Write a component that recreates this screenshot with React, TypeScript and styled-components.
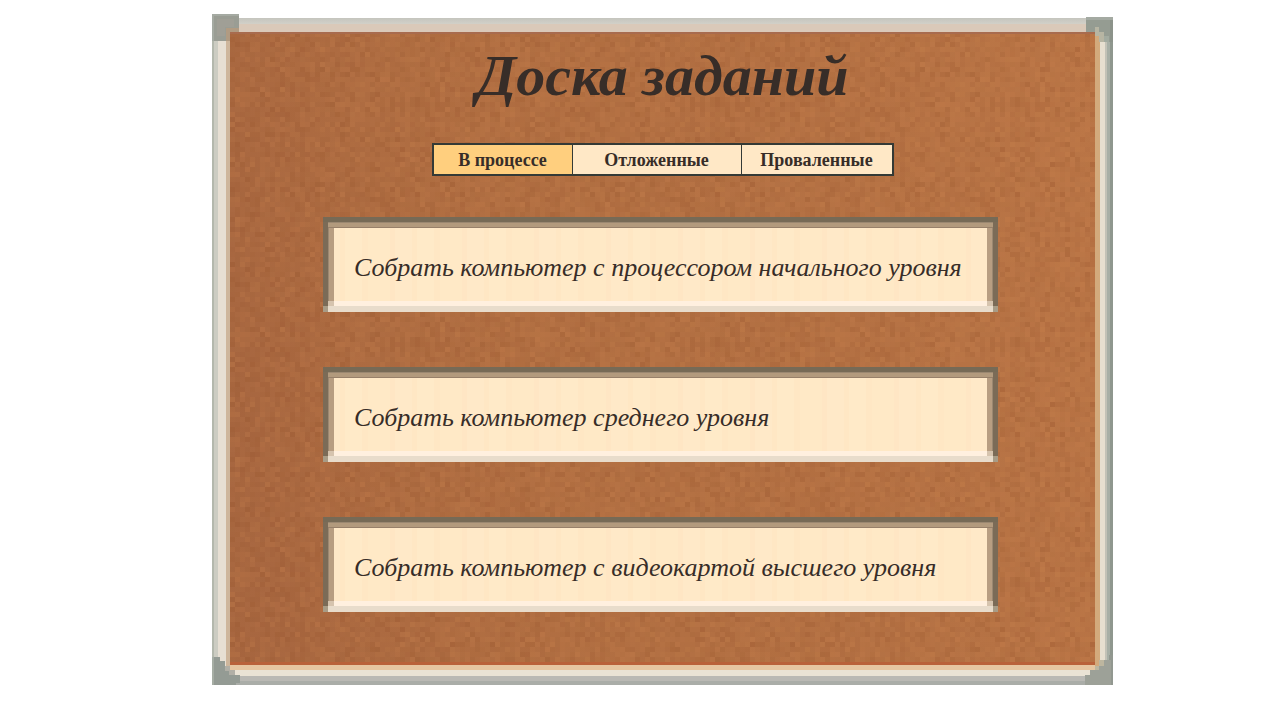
import React, { useState } from 'react';
import styled, { createGlobalStyle } from 'styled-components';

const GlobalStyle = createGlobalStyle`
  * { box-sizing: border-box; }
  body { margin: 0; background: #fff; }
`;

const Page = styled.div`
  display: flex;
  justify-content: center;
  min-height: 100vh;
  padding: 18px 0 36px 45px;
  font-family: 'Liberation Serif', serif;
  color: #372d28;
`;

const Board = styled.main`
  position: relative;
  align-self: flex-start;
  width: 100%;
  max-width: 901px;
  padding: 14px 18px 20px;
  background:
    linear-gradient(#c5c5be, #d2d0c8 6px, transparent 6px) top / 100% 6px no-repeat,
    linear-gradient(to right, #b4b8ad 2px, #ccccc2 2px, #ccccc2 6px, #e7dfd3 6px, #e7dfd3 14px, #ceb69c 14px) left / 18px 100% no-repeat,
    linear-gradient(to left, #8f978e 3px, #a8afa6 3px, #a8afa6 6px, #c3c2b7 6px, #c3c2b7 8px, #e7dfd0 8px, #e7dfd0 13px, #d3aa7c 13px) right / 18px 100% no-repeat,
    linear-gradient(to top, #aaada8 4px, #bab9b4 4px, #bab9b4 9px, #eae3d5 9px, #eae3d5 15px, #e6c6a1 15px) bottom / 100% 20px no-repeat,
    #dac9b9;
`;

const Cork = styled.div`
  position: relative;
  display: flex;
  flex-direction: column;
  align-items: center;
  min-height: 633px;
  padding: 8px 92px 53px;
  background: #b37043;
`;

const Texture = styled.svg`
  position: absolute;
  inset: 0;
  width: 100%;
  height: 100%;
`;

const CornerArt = styled.svg<{ $bottom?: boolean; $right?: boolean }>`
  position: absolute;
  width: 28px;
  height: 30px;
  ${p => (p.$bottom ? 'bottom: 0;' : p.$right ? 'top: -2px;' : 'top: -4px;')}
  ${p => (p.$right ? 'right: 0;' : 'left: 0;')}
`;

const Title = styled.h1`
  position: relative;
  margin: 0;
  font-size: 58px;
  line-height: 72px;
  font-style: italic;
  font-weight: 700;
`;

const Tabs = styled.nav`
  position: relative;
  display: grid;
  grid-template-columns: 138fr 169fr 151fr;
  width: 100%;
  max-width: 462px;
  height: 33px;
  margin-top: 31px;
  border: 2px solid #343a36;
`;

const Tab = styled.button<{ $active: boolean }>`
  border: 0;
  padding: 0 2px;
  background: ${p => (p.$active ? '#ffcf7e' : '#ffe8c6')};
  color: inherit;
  font: 700 18px/28px 'Liberation Serif', serif;
  cursor: pointer;
  & + & { border-left: 1px solid #343a36; }
`;

const TaskList = styled.ul`
  position: relative;
  display: flex;
  flex-direction: column;
  gap: 55px;
  width: 100%;
  max-width: 675px;
  margin: 41px 4px 0 0;
  padding: 0;
  list-style: none;
`;

const Task = styled.li`
  position: relative;
  display: flex;
  align-items: center;
  min-height: 95px;
  padding: 6px 31px 0;
  font-size: 26px;
  line-height: 32px;
  font-style: italic;
  background:
    linear-gradient(#a89c86, #a89c86) left bottom / 5px 6px no-repeat,
    linear-gradient(#a89c86, #a89c86) right bottom / 5px 6px no-repeat,
    linear-gradient(#766a56, #766a56) top / 100% 5px no-repeat,
    linear-gradient(#7b6b57, #7b6b57) left / 5px 100% no-repeat,
    linear-gradient(#7b6b57, #7b6b57) right / 5px 100% no-repeat,
    linear-gradient(#e8dccb, #e8dccb) bottom / 100% 6px no-repeat,
    linear-gradient(#9b8871 1px, #b29a7d 1px, #b29a7d 5px, #97806a 5px) 5px 5px / calc(100% - 10px) 6px no-repeat,
    linear-gradient(to right, #9b8871 1px, #b89e82 1px) 5px 5px / 6px calc(100% - 16px) no-repeat,
    linear-gradient(to left, #9b8871 1px, #b89e82 1px) right 5px top 5px / 6px calc(100% - 16px) no-repeat,
    linear-gradient(#d6c4ae, #d6c4ae) left 5px bottom 6px / 6px 5px no-repeat,
    linear-gradient(#d6c4ae, #d6c4ae) right 5px bottom 6px / 6px 5px no-repeat,
    linear-gradient(#fff0df, #fff0df) left bottom 6px / 100% 5px no-repeat,
    repeating-linear-gradient(to right, #ffe9c8 0 17px, #ffe7c4 17px 22px, #ffeac8 22px 39px, #ffe7c4 39px 45px, #ffe9c6 45px 67px, #ffe6c4 67px 72px);
`;

const CELL = 5;
const TILE_COLS = 60;
const TILE_ROWS = 48;

/* Deterministic generator, so that the cork grain is the same on each render. */
function makeGrain() {
  let seed = 7919;
  const next = () => {
    seed = (seed * 1664525 + 1013904223) % 4294967296;
    return seed / 4294967296;
  };
  const cells: { x: number; y: number; fill: string; opacity: number }[] = [];
  for (let row = 0; row < TILE_ROWS; row++) {
    for (let col = 0; col < TILE_COLS; col++) {
      const value = next() + next() - 1;
      cells.push({
        x: col * CELL,
        y: row * CELL,
        fill: value > 0 ? '#d08850' : '#8e4c24',
        opacity: Math.round(Math.abs(value) * 25) / 100,
      });
    }
  }
  return cells;
}

const grain = makeGrain();

function CorkTexture() {
  return (
    <Texture aria-hidden="true">
      <defs>
        <pattern id="grain" width={TILE_COLS * CELL} height={TILE_ROWS * CELL} patternUnits="userSpaceOnUse">
          {grain.map(c => (
            <rect key={`${c.x}-${c.y}`} x={c.x} y={c.y} width={CELL} height={CELL} fill={c.fill} opacity={c.opacity} shapeRendering="crispEdges" />
          ))}
        </pattern>
        <linearGradient id="shade" x1="0" y1="0.4" x2="1" y2="0.3">
          <stop offset="0" stopColor="#93553a" stopOpacity="0.35" />
          <stop offset="0.35" stopColor="#a9673c" stopOpacity="0.15" />
          <stop offset="1" stopColor="#c37b49" stopOpacity="0.4" />
        </linearGradient>
      </defs>
      <rect width="100%" height="100%" fill="url(#shade)" />
      <rect width="100%" height="100%" fill="url(#grain)" />
      <rect width="100%" height="2" fill="#a86b4e" />
      <rect y="100%" width="100%" height="3" transform="translate(0 -3)" fill="#b9623a" />
    </Texture>
  );
}

function Corners() {
  return (
    <>
      <CornerArt viewBox="0 0 28 30" aria-hidden="true">
        <path d="M0 0H27V18H18V27H0Z" fill="#9a9d94" />
        <path d="M5 5H22V13H13V22H5Z" fill="#a09f96" />
        <path d="M14 14H27V18H18V27H14Z" fill="#b19b82" />
        <path d="M0 0H27V2H2V27H0Z" fill="#a5aaa2" />
      </CornerArt>
      <CornerArt $right viewBox="0 0 28 30" aria-hidden="true">
        <path d="M1 1H28V26H14V20H10V16H1Z" fill="#959c92" />
        <path d="M1 1H28V4H1Z" fill="#a4aaa2" />
        <path d="M10 11H14V16H19V26H14V20H10Z" fill="#b7b5a3" />
        <path d="M19 20H24V26H19Z" fill="#a3aba0" />
        <path d="M25 4H28V26H25Z" fill="#8c938a" />
      </CornerArt>
      <CornerArt $bottom viewBox="0 0 28 30" aria-hidden="true">
        <path d="M0 2H8V6H13V11H18V15H23V20H28V28H24V30H0Z" fill="#949b94" />
        <path d="M13 11H18V15H23V20H17V16H13Z" fill="#b1afa6" />
        <path d="M0 2H2V30H0Z" fill="#a6ada4" />
      </CornerArt>
      <CornerArt $bottom $right viewBox="0 0 28 30" aria-hidden="true">
        <path d="M28 0H24V5H19V6H14V11H10V15H5V20H0V30H28Z" fill="#9da198" />
        <path d="M19 5H14V11H10V15H14V11H19Z" fill="#bdb69f" />
        <path d="M24 0H28V30H26V5H24Z" fill="#929890" />
      </CornerArt>
    </>
  );
}

const tabNames = ['В процессе', 'Отложенные', 'Проваленные'];

const tasks = [
  'Собрать компьютер с процессором начального уровня',
  'Собрать компьютер среднего уровня',
  'Собрать компьютер с видеокартой высшего уровня',
];

export default function App() {
  const [active, setActive] = useState(0);
  return (
    <>
      <GlobalStyle />
      <Page>
        <Board>
          <Cork>
            <CorkTexture />
            <Title>Доска заданий</Title>
            <Tabs>
              {tabNames.map((name, i) => (
                <Tab key={name} type="button" $active={i === active} aria-pressed={i === active} onClick={() => setActive(i)}>
                  {name}
                </Tab>
              ))}
            </Tabs>
            <TaskList>
              {tasks.map(task => (
                <Task key={task}>{task}</Task>
              ))}
            </TaskList>
          </Cork>
          <Corners />
        </Board>
      </Page>
    </>
  );
}
